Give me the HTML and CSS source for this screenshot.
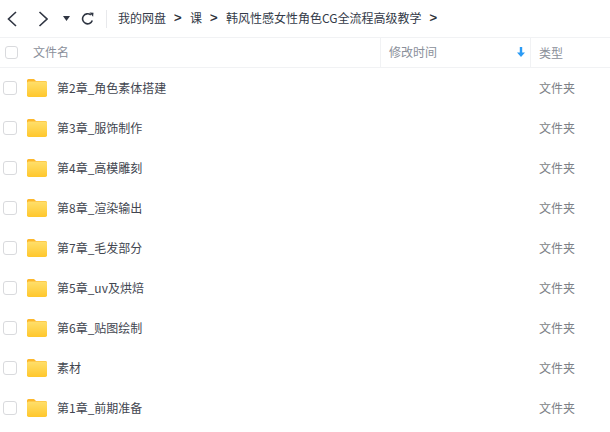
FILE: index.html
```html
<!DOCTYPE html>
<html lang="zh">
<head>
<meta charset="utf-8">
<title>我的网盘</title>
<link rel="stylesheet" href="styles.css">
</head>
<body>
<div class="app">
  <nav class="toolbar">
    <svg class="ic back" width="10" height="16" viewBox="0 0 10 16"><path d="M9 1 1.500 8 9 15"/></svg>
    <svg class="ic fwd" width="10" height="16" viewBox="0 0 10 16"><path d="M1.500 1 9 8 1.500 15"/></svg>
    <svg class="caret" width="7" height="5" viewBox="0 0 7 5"><path d="M0 0h7L3.500 5z"/></svg>
    <svg class="ic refresh" width="13" height="13" viewBox="0 0 13 13"><path d="M11.300 8.500A5 5 0 1 1 9.800 3"/><path class="fill" d="M8.500 .5l4 .2-.4 4z"/></svg>
    <span class="divider"></span>
    <div class="crumbs">
      <span>我的网盘</span><span class="sep">&gt;</span><span>课</span><span class="sep">&gt;</span><span>韩风性感女性角色CG全流程高级教学</span><span class="sep">&gt;</span>
    </div>
  </nav>
  <header class="head">
    <div class="c-name"><span class="box"></span><span class="label">文件名</span></div>
    <div class="c-time"><span class="label">修改时间</span><svg class="sort" width="8" height="10" viewBox="0 0 8 10"><path d="M2.800 0h2.400v5.500H8L4 10 0 5.500h2.800z"/></svg></div>
    <div class="c-type"><span class="label">类型</span></div>
  </header>
  <main class="list">
    <div class="row"><span class="box"></span><svg class="folder" width="20" height="18" viewBox="0 0 20 18"><use href="#f"/></svg><span class="name">第2章_角色素体搭建</span><span class="type">文件夹</span></div>
    <div class="row"><span class="box"></span><svg class="folder" width="20" height="18" viewBox="0 0 20 18"><use href="#f"/></svg><span class="name">第3章_服饰制作</span><span class="type">文件夹</span></div>
    <div class="row"><span class="box"></span><svg class="folder" width="20" height="18" viewBox="0 0 20 18"><use href="#f"/></svg><span class="name">第4章_高模雕刻</span><span class="type">文件夹</span></div>
    <div class="row"><span class="box"></span><svg class="folder" width="20" height="18" viewBox="0 0 20 18"><use href="#f"/></svg><span class="name">第8章_渲染输出</span><span class="type">文件夹</span></div>
    <div class="row"><span class="box"></span><svg class="folder" width="20" height="18" viewBox="0 0 20 18"><use href="#f"/></svg><span class="name">第7章_毛发部分</span><span class="type">文件夹</span></div>
    <div class="row"><span class="box"></span><svg class="folder" width="20" height="18" viewBox="0 0 20 18"><use href="#f"/></svg><span class="name">第5章_uv及烘焙</span><span class="type">文件夹</span></div>
    <div class="row"><span class="box"></span><svg class="folder" width="20" height="18" viewBox="0 0 20 18"><use href="#f"/></svg><span class="name">第6章_贴图绘制</span><span class="type">文件夹</span></div>
    <div class="row"><span class="box"></span><svg class="folder" width="20" height="18" viewBox="0 0 20 18"><use href="#f"/></svg><span class="name">素材</span><span class="type">文件夹</span></div>
    <div class="row"><span class="box"></span><svg class="folder" width="20" height="18" viewBox="0 0 20 18"><use href="#f"/></svg><span class="name">第1章_前期准备</span><span class="type">文件夹</span></div>
  </main>
</div>
<svg class="defs" width="0" height="0">
  <defs>
    <linearGradient id="g" x1="0" y1="0" x2="0" y2="1"><stop offset="0" stop-color="#ffdf6b"/><stop offset="1" stop-color="#ffc72c"/></linearGradient>
    <g id="f">
      <path d="M1.500 0h5.500l2 2h9.500A1.500 1.500 0 0 1 20 3.500V6H0V1.500A1.500 1.500 0 0 1 1.500 0z" fill="#fdb72a"/>
      <rect x="0" y="2.600" width="20" height="15.400" rx="1.700" fill="url(#g)"/>
    </g>
  </defs>
</svg>
</body>
</html>
```
FILE: styles.css
```css
* { box-sizing: border-box; }
html, body { margin: 0; padding: 0; background: #fff; }
body { font-family: "Noto Sans CJK SC", "Liberation Sans", sans-serif; font-size: 12px; color: #424e67; overflow: hidden; }
.app { width: 610px; height: 432px; overflow: hidden; }
.defs { position: absolute; }

.toolbar { height: 38px; display: flex; align-items: center; border-bottom: 1px solid #f1f2f4; padding-left: 7px; }
.ic { fill: none; stroke: #2f3542; stroke-width: 1.600; flex: none; }
.ic .fill { fill: #2f3542; stroke: none; }
.back { margin-right: 21px; }
.fwd { margin-right: 15px; }
.caret { fill: #2f3542; margin-right: 11px; flex: none; }
.refresh { margin-right: 12px; }
.divider { width: 1px; height: 18px; background: #e8e9ec; margin-right: 11px; flex: none; }
.crumbs { display: flex; align-items: center; color: #333a48; white-space: nowrap; line-height: 18px; padding-bottom: 1px; }
.sep { margin: 0 8px; width: 8px; font-family: "Liberation Sans", sans-serif; font-size: 13px; color: #20242c; -webkit-text-stroke: 0.3px #20242c; }

.head { height: 30px; display: flex; align-items: center; border-bottom: 1px solid #f1f2f4; color: #8a8f9a; }
.c-name { width: 380px; display: flex; align-items: center; padding-left: 5px; height: 100%; }
.c-name .box { margin-right: 15px; }
.label { line-height: 18px; padding-bottom: 1px; }
.c-time { width: 151px; height: 100%; display: flex; align-items: center; justify-content: space-between; padding: 0 5px 0 8px; border-left: 1px solid #f1f2f4; border-right: 1px solid #f1f2f4; }
.sort { fill: #2b9bf5; flex: none; margin-bottom: 2px; }
.c-type { padding-left: 8px; }

.box { width: 13px; height: 13px; border: 1px solid #d9dadd; border-radius: 3px; background: #fff; flex: none; }
.row { height: 40px; display: flex; align-items: center; padding-left: 3px; }
.row .box { width: 14px; height: 14px; margin-right: 10px; }
.folder { flex: none; margin-right: 10px; }
.name { width: 482px; color: #424650; white-space: nowrap; padding-bottom: 2px; }
.type { color: #7c7f86; white-space: nowrap; padding-bottom: 2px; }
```
